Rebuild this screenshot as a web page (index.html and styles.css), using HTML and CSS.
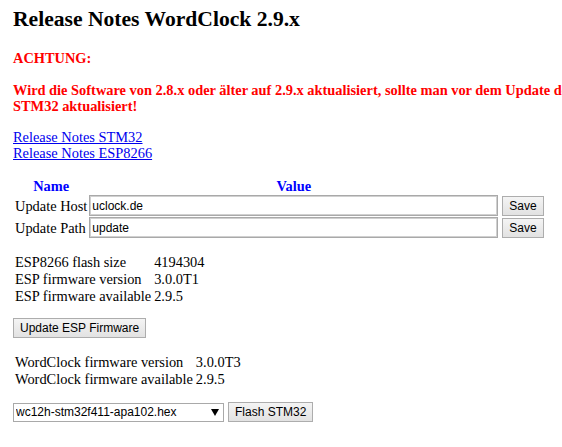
FILE: index.html
```html
<!DOCTYPE html>
<html lang="de">
<head>
<meta charset="utf-8">
<title>Release Notes WordClock 2.9.x</title>
<link rel="stylesheet" href="styles.css">
</head>
<body>
<h2 class="title">Release Notes WordClock 2.9.x</h2>
<p class="warn warn-head">ACHTUNG:</p>
<p class="warn warn-text">Wird die Software von 2.8.x oder älter auf 2.9.x aktualisiert, sollte man vor dem Update den<br>STM32 aktualisiert!</p>
<div class="links">
  <a href="#stm32" class="link">Release Notes STM32</a><br>
  <a href="#esp8266" class="link">Release Notes ESP8266</a>
</div>

<table class="params">
  <tr>
    <th class="head">Name</th>
    <th class="head">Value</th>
    <th></th>
  </tr>
  <tr>
    <td class="label">Update Host</td>
    <td><input class="field" type="text" value="uclock.de"></td>
    <td class="btn-cell"><button class="btn">Save</button></td>
  </tr>
  <tr>
    <td class="label">Update Path</td>
    <td><input class="field" type="text" value="update"></td>
    <td class="btn-cell"><button class="btn">Save</button></td>
  </tr>
</table>

<table class="info esp">
  <tr><td class="key">ESP8266 flash size</td><td>4194304</td></tr>
  <tr><td class="key">ESP firmware version</td><td>3.0.0T1</td></tr>
  <tr><td class="key">ESP firmware available</td><td>2.9.5</td></tr>
</table>

<div class="action">
  <button class="btn">Update ESP Firmware</button>
</div>

<table class="info wc">
  <tr><td class="key">WordClock firmware version</td><td>3.0.0T3</td></tr>
  <tr><td class="key">WordClock firmware available</td><td>2.9.5</td></tr>
</table>

<div class="action flash">
  <span class="select-wrap">
    <select class="select">
      <option>wc12h-stm32f411-apa102.hex</option>
    </select>
    <span class="arrow"></span>
  </span>
  <button class="btn">Flash STM32</button>
</div>
</body>
</html>
```
FILE: styles.css
```css
html {
  overflow: hidden;
  background: #fff;
}

body {
  margin: 0;
  padding: 7px 13px 0 13px;
  font-family: "Liberation Serif", "Times New Roman", serif;
  font-size: 14.4px;
  line-height: 16px;
  color: #000;
}

.title {
  margin: 0;
  font-size: 21.6px;
  line-height: 24px;
  font-weight: bold;
}

.warn {
  color: #ff0000;
  font-weight: bold;
  margin: 0;
}

.warn-head {
  margin-top: 19px;
}

.warn-text {
  margin-top: 16px;
  white-space: nowrap;
}

.links {
  margin-top: 15px;
}

.link {
  color: #0000ee;
  text-decoration: underline;
}

.params {
  margin-top: 16px;
  border-collapse: separate;
  border-spacing: 2px 1px;
}

.params th,
.params td {
  padding: 0;
  vertical-align: middle;
}

.head {
  color: #0000ff;
  font-weight: bold;
  text-align: center;
  line-height: 16px;
}

.label {
  white-space: nowrap;
}

.field {
  box-sizing: border-box;
  width: 409px;
  height: 21px;
  margin: 0;
  padding: 0 2px;
  border: 1px solid #a9a9a9;
  box-shadow: inset 0 0 0 1px #d0d0d0;
  font-family: "Liberation Sans", Arial, sans-serif;
  font-size: 12px;
  color: #000;
  background: #fff;
  display: block;
}

.btn-cell {
  padding-left: 2px !important;
}

.btn {
  box-sizing: border-box;
  height: 20px;
  margin: 0;
  padding: 0 6px;
  border: 1px solid #adadad;
  border-radius: 0;
  background: linear-gradient(#f4f4f4, #e2e2e2);
  font-family: "Liberation Sans", Arial, sans-serif;
  font-size: 12px;
  color: #000;
  display: block;
}

.info {
  border-collapse: separate;
  border-spacing: 2px 0;
  margin-top: 15px;
}

.info td {
  padding: 0;
  line-height: 17px;
  white-space: nowrap;
}

.info .key {
  padding-right: 1px;
}

.action {
  margin-top: 13px;
  display: flex;
  align-items: center;
  gap: 4px;
}

.info.wc {
  margin-top: 16px;
}

.action.flash {
  margin-top: 14px;
}

.select-wrap {
  position: relative;
  display: block;
}

.select {
  appearance: none;
  -webkit-appearance: none;
  box-sizing: border-box;
  width: 211px;
  height: 19px;
  margin: 0;
  padding: 0 2px;
  border: 1px solid #a9a9a9;
  border-radius: 0;
  background: #fff;
  font-family: "Liberation Sans", Arial, sans-serif;
  font-size: 12px;
  color: #000;
  display: block;
}

.arrow {
  position: absolute;
  right: 5px;
  top: 6px;
  width: 0;
  height: 0;
  border-left: 4px solid transparent;
  border-right: 4px solid transparent;
  border-top: 7px solid #000;
  pointer-events: none;
}
```
